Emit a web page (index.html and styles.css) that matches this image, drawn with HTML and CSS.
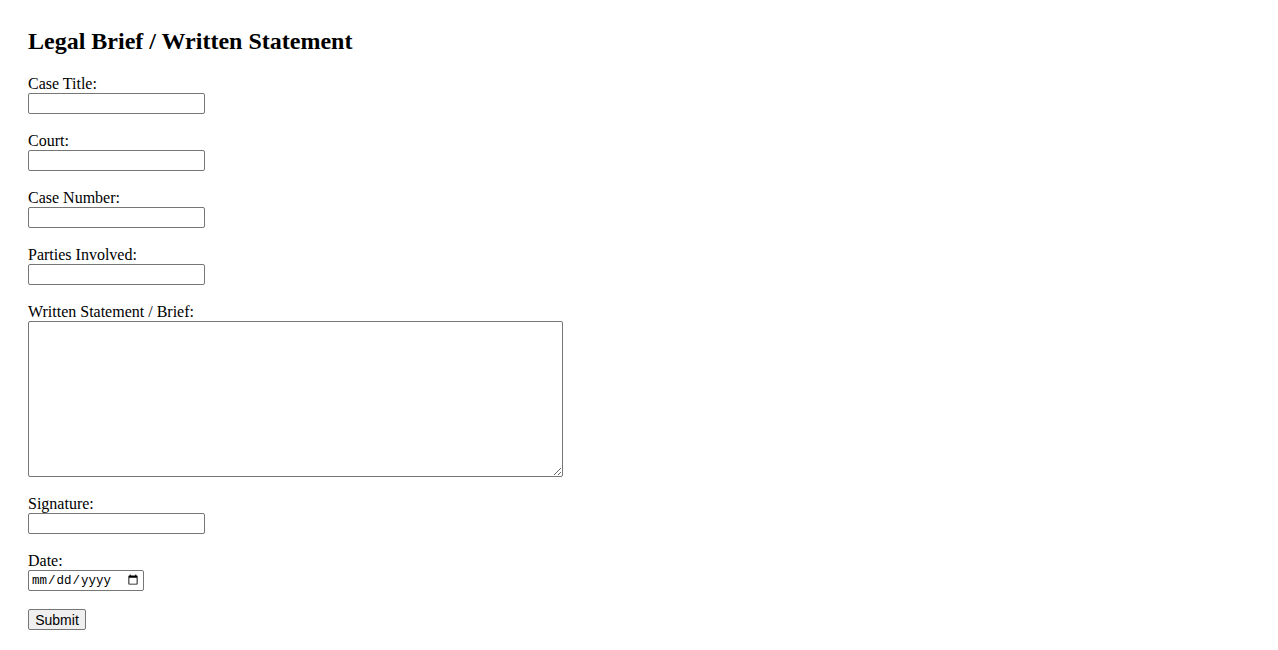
FILE: index.html
```html
<!DOCTYPE html>
<html lang="en">
<head>
    <meta charset="UTF-8">
    <meta name="viewport" content="width=device-width, initial-scale=1.0">
    <title>Legal Brief / Written Statement</title>
    <link rel="stylesheet" href="styles.css">
</head>
<body>
    <h2>Legal Brief / Written Statement</h2>
    <form class="brief-form">
        <div class="field">
            <label for="title">Case Title:</label>
            <input type="text" id="title" name="title">
        </div>
        <div class="field">
            <label for="court">Court:</label>
            <input type="text" id="court" name="court">
        </div>
        <div class="field">
            <label for="number">Case Number:</label>
            <input type="text" id="number" name="number">
        </div>
        <div class="field">
            <label for="parties">Parties Involved:</label>
            <input type="text" id="parties" name="parties">
        </div>
        <div class="field">
            <label for="statement">Written Statement / Brief:</label>
            <textarea id="statement" name="statement"></textarea>
        </div>
        <div class="field">
            <label for="signature">Signature:</label>
            <input type="text" id="signature" name="signature">
        </div>
        <div class="field">
            <label for="date">Date:</label>
            <input type="date" id="date" name="date">
        </div>
        <div class="field">
            <button type="submit">Submit</button>
        </div>
    </form>
</body>
</html>
```

FILE: styles.css
```css
body {
    margin: 0;
    padding: 28px 28px;
    font-family: "Liberation Serif", "Times New Roman", serif;
    font-size: 16px;
    color: black;
    background: white;
}
h2 {
    margin: 0 0 20px;
    font-size: 24px;
    font-weight: bold;
}
.brief-form {
    display: flex;
    flex-direction: column;
    align-items: flex-start;
}
.field {
    display: flex;
    flex-direction: column;
    align-items: flex-start;
    margin-bottom: 18px;
}
.field input,
.field textarea,
.field button {
    font-family: "Liberation Sans", Arial, sans-serif;
    font-size: 13.33px;
}
.field input[type="text"] {
    width: 177px;
    height: 21px;
    box-sizing: border-box;
    padding: 1px 2px;
    border: 1px solid #767676;
    border-radius: 2px;
}
.field input[type="date"] {
    width: 116px;
    height: 21px;
    box-sizing: border-box;
    padding: 1px 2px;
    border: 1px solid #767676;
    border-radius: 2px;
    font-family: "Liberation Mono", monospace;
    font-size: 12.5px;
}
.field textarea {
    width: 535px;
    height: 156px;
    box-sizing: border-box;
    border: 1px solid #767676;
    border-radius: 2px;
}
.field button {
    width: 58px;
    height: 21px;
    padding: 1px 6px;
    border: 1px solid #767676;
    border-radius: 2px;
    background: #efefef;
    color: black;
    font-size: 14px;
}
```
